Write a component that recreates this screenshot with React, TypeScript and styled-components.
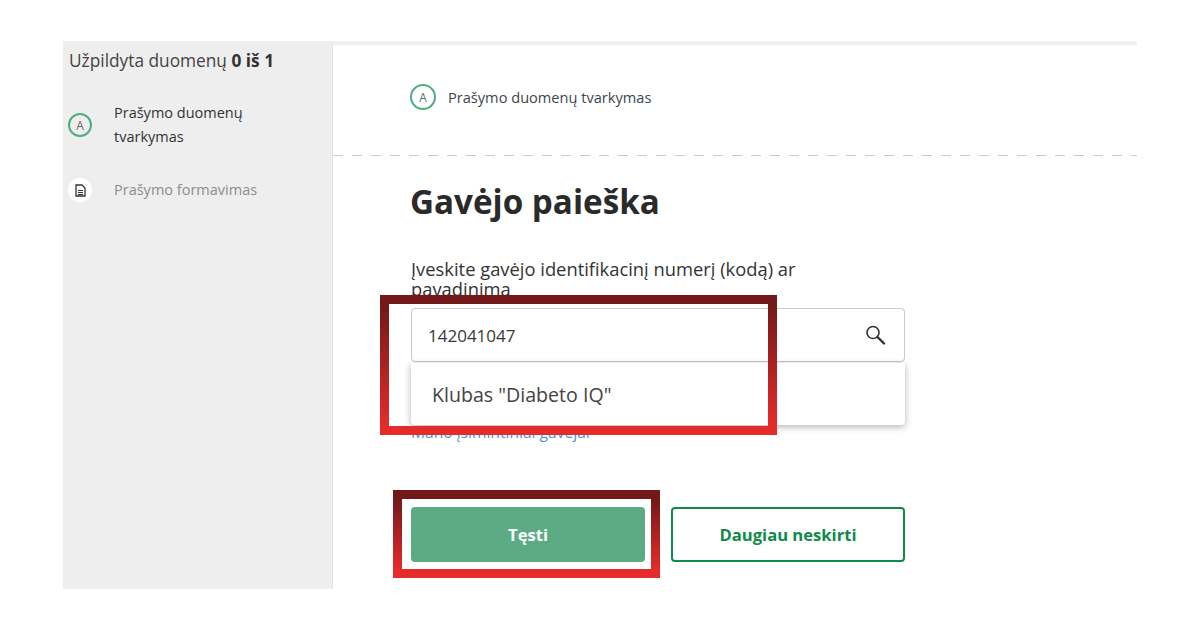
import styled, { createGlobalStyle } from 'styled-components'

const GlobalStyle = createGlobalStyle`
  html, body {
    margin: 0;
    padding: 0;
    width: 1200px;
    height: 630px;
    overflow: hidden;
    background: #fff;
    font-family: "Open Sans", "Noto Sans", sans-serif;
  }
`

const Page = styled.div`
  position: relative;
  width: 1200px;
  height: 630px;
  padding: 41px 63px;
  box-sizing: border-box;
  background: #fff;
`

const Frame = styled.div`
  display: flex;
  width: 1074px;
  height: 548px;
  overflow: hidden;
`

const Sidebar = styled.aside`
  width: 269px;
  flex: none;
  padding: 9px 0 0 5px;
  box-sizing: border-box;
  background: #eeeeee;
`

const Progress = styled.div`
  margin-left: 1px;
  font-size: 17.3px;
  line-height: 22px;
  color: #444444;

  b {
    font-weight: 700;
    color: #333;
  }
`

const StepRow = styled.div<{ $top: number }>`
  display: flex;
  align-items: center;
  gap: 22px;
  margin-top: ${props => props.$top}px;
`

const StepText = styled.div<{ $muted?: boolean }>`
  font-size: 14.5px;
  line-height: 24px;
  color: ${props => (props.$muted ? '#8c8c8c' : '#333333')};
`

const LetterBadge = styled.span<{ $size: number }>`
  width: ${props => props.$size}px;
  height: ${props => props.$size}px;
  flex: none;
  display: flex;
  align-items: center;
  justify-content: center;
  box-sizing: border-box;
  border: 2px solid #4fae80;
  border-radius: 50%;
  font-size: 12px;
  font-weight: 400;
  color: #666;
`

const DocBadge = styled.span`
  width: 24px;
  height: 24px;
  flex: none;
  display: flex;
  align-items: center;
  justify-content: center;
  border-radius: 50%;
  background: #fff;
`

const Main = styled.main`
  flex: 1;
  min-width: 0;
  border-left: 1px solid #e2e2e2;
  border-top: 4px solid #f0f0f0;
  box-sizing: border-box;
`

const Crumb = styled.div`
  display: flex;
  align-items: center;
  gap: 12px;
  height: 111px;
  padding: 0 0 7px 77px;
  box-sizing: border-box;
  background: repeating-linear-gradient(90deg, #c8c8c8 0 10px, transparent 10px 19px) left bottom / 100% 1px no-repeat;
  font-size: 14.6px;
  color: #3c4650;
`

const Content = styled.div`
  width: 494px;
  margin-left: 78px;
`

const Title = styled.h1`
  margin: 26px 0 0 -1px;
  font-size: 33.2px;
  line-height: 40px;
  font-weight: 700;
  color: #2a2a2a;
`

const Label = styled.label`
  display: block;
  width: 460px;
  margin-top: 37px;
  font-size: 18.35px;
  line-height: 20px;
  color: #333;
`

const SearchWrap = styled.div`
  position: relative;
  margin-top: 9px;
`

const SearchBox = styled.div`
  display: flex;
  align-items: center;
  justify-content: space-between;
  height: 54px;
  padding: 0 18px 0 16px;
  box-sizing: border-box;
  border: 1px solid #c9c9c9;
  border-radius: 4px;
  background: #fff;
  font-size: 17px;
  color: #3a3a3a;
`

const Dropdown = styled.div`
  position: absolute;
  top: 55px;
  left: 0;
  right: 0;
  height: 62px;
  display: flex;
  align-items: center;
  padding-left: 21px;
  border-radius: 0 0 4px 4px;
  background: #fff;
  box-shadow: 0 2px 7px rgba(0, 0, 0, 0.3);
  font-size: 19.6px;
  color: #444;
  z-index: 1;
`

const SavedLink = styled.a`
  display: block;
  margin-top: 60px;
  font-size: 15.6px;
  line-height: 20px;
  color: #3f9bd5;
`

const Actions = styled.div`
  display: flex;
  gap: 26px;
  margin-top: 65px;
`

const Button = styled.button<{ $outline?: boolean }>`
  width: 234px;
  height: 55px;
  box-sizing: border-box;
  border-radius: 4px;
  border: 2px solid ${props => (props.$outline ? '#0f8a4b' : '#5cab84')};
  background: ${props => (props.$outline ? '#fff' : '#5cab84')};
  color: ${props => (props.$outline ? '#0f8a4b' : '#fff')};
  font-family: inherit;
  font-size: 16.6px;
  font-weight: 700;
`

const Highlight = styled.div<{ $x: number; $y: number; $w: number; $h: number }>`
  position: absolute;
  left: ${props => props.$x}px;
  top: ${props => props.$y}px;
  width: ${props => props.$w}px;
  height: ${props => props.$h}px;
  box-sizing: border-box;
  border: 9px solid transparent;
  border-image: linear-gradient(180deg, #721818, #e62b2b) 1;
  z-index: 2;
`

const MagnifierIcon = () => (
  <svg width="22" height="22" viewBox="0 0 22 22" fill="none" stroke="#333" strokeLinecap="round">
    <circle cx="9" cy="8.5" r="6" strokeWidth="1.6" />
    <path d="M13.5 13l6.5 6.5" strokeWidth="2.4" />
  </svg>
)

const DocIcon = () => (
  <svg width="11" height="13" viewBox="0 0 11 13" fill="none" stroke="#333" strokeWidth="1.3">
    <path d="M1 1h6l3 3v8H1z" />
    <path d="M3 6.5h5M3 8.5h5M3 10.5h5" strokeWidth="1" />
  </svg>
)

const App = () => {
  return (
    <>
      <GlobalStyle />
      <Page>
        <Frame>
          <Sidebar>
            <Progress>
              Užpildyta duomenų <b>0 iš 1</b>
            </Progress>
            <StepRow $top={29}>
              <LetterBadge $size={24}>A</LetterBadge>
              <StepText>
                Prašymo duomenų
                <br />
                tvarkymas
              </StepText>
            </StepRow>
            <StepRow $top={29}>
              <DocBadge>
                <DocIcon />
              </DocBadge>
              <StepText $muted>Prašymo formavimas</StepText>
            </StepRow>
          </Sidebar>
          <Main>
            <Crumb>
              <LetterBadge $size={26}>A</LetterBadge>
              Prašymo duomenų tvarkymas
            </Crumb>
            <Content>
              <Title>Gavėjo paieška</Title>
              <Label>Įveskite gavėjo identifikacinį numerį (kodą) ar pavadinimą</Label>
              <SearchWrap>
                <SearchBox>
                  142041047
                  <MagnifierIcon />
                </SearchBox>
                <Dropdown>Klubas "Diabeto IQ"</Dropdown>
              </SearchWrap>
              <SavedLink>Mano įsimintiniai gavėjai</SavedLink>
              <Actions>
                <Button>Tęsti</Button>
                <Button $outline>Daugiau neskirti</Button>
              </Actions>
            </Content>
          </Main>
        </Frame>
        <Highlight $x={380} $y={295} $w={397} $h={140} />
        <Highlight $x={393} $y={490} $w={267} $h={88} />
      </Page>
    </>
  )
}

export default App
